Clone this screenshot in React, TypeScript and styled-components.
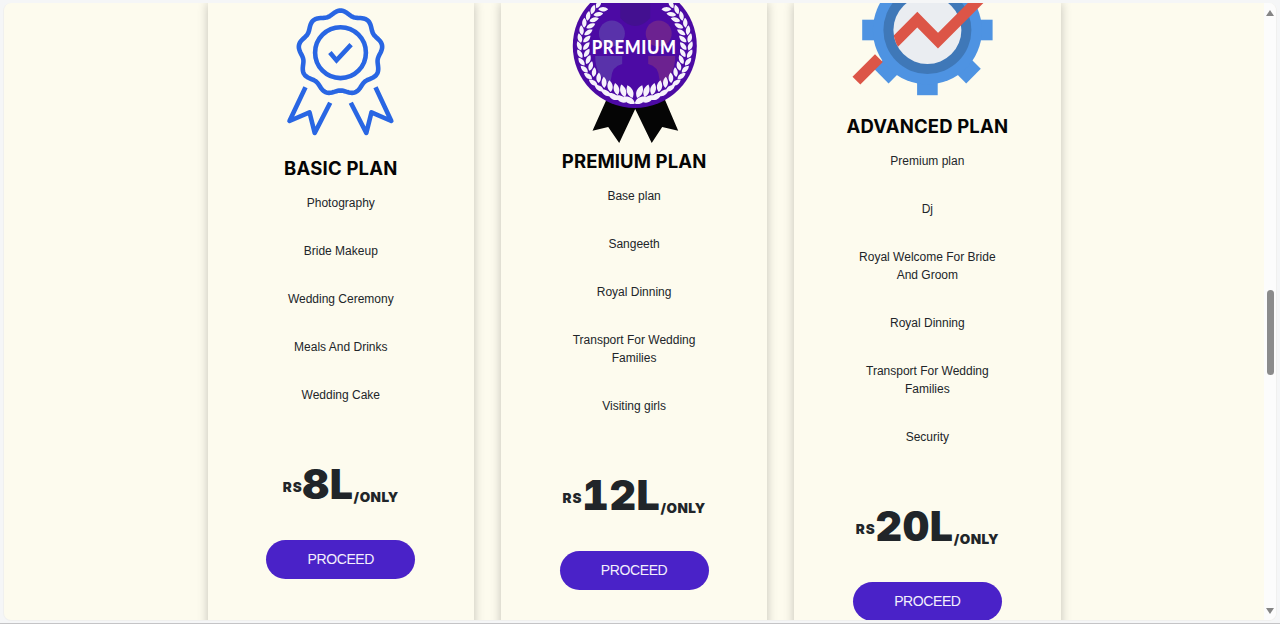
import React from "react";
import styled, { createGlobalStyle } from "styled-components";

const GlobalStyle = createGlobalStyle`
  * { box-sizing: border-box; }
  body { margin: 0; background: #f5f6f7; font-family: "Liberation Sans", Arial, sans-serif; }
`;

const Shell = styled.div`
  height: 624px;
  padding: 3px;
  border-bottom: 1px solid #c4c4c6;
  overflow: hidden;
`;

const Viewport = styled.div`
  display: flex;
  height: 618px;
  border: 1px solid #f0f0ef;
  border-top: 0;
  border-radius: 8px;
  overflow: hidden;
  background: #fdfbee;
`;

const Plans = styled.main`
  flex: 1;
  display: flex;
  gap: 26.7px;
  padding-left: 203.5px;
`;

const Card = styled.section`
  flex: none;
  width: 266.6px;
  height: 700px;
  padding: 0 58.8px;
  display: flex;
  flex-direction: column;
  background: #fdfbee;
  box-shadow: 0 0 10px rgba(0, 0, 0, 0.23);
`;

const Art = styled.svg<{ $height: number }>`
  display: block;
  flex: none;
  width: 149px;
  height: ${(p) => p.$height}px;
  overflow: visible;
`;

const Title = styled.h2<{ $spacing: number }>`
  margin: 0 -20px;
  height: 22px;
  font: 650 18.5px/22px Inter, sans-serif;
  letter-spacing: ${(p) => p.$spacing}px;
  color: #050505;
  text-align: center;
  white-space: nowrap;
`;

const Features = styled.ul`
  list-style: none;
  margin: 0;
  padding: 0;
`;

const Feature = styled.li`
  padding: 15px 0;
  font-size: 12px;
  line-height: 18px;
  color: #212529;
  text-align: center;
`;

const Price = styled.div`
  display: flex;
  justify-content: center;
  align-items: baseline;
  height: 121px;
  margin: 0 -20px;
  padding-top: 41px;
  font-family: Inter, sans-serif;
  font-weight: 900;
  line-height: 48px;
  color: #212529;
`;

const Currency = styled.span`
  position: relative;
  top: -7px;
  font-size: 13.5px;
  letter-spacing: 0.9px;
`;

const Amount = styled.span`
  font-size: 41px;
  font-variant-numeric: tabular-nums;
  letter-spacing: 0.7px;
`;

const Period = styled.span`
  position: relative;
  top: 3px;
  font-size: 13.5px;
  letter-spacing: 0.5px;
`;

const Proceed = styled.button`
  flex: none;
  height: 38.5px;
  padding: 0;
  border: 0;
  border-radius: 20px;
  background: #4a22c8;
  color: #f3effc;
  font: 14px/38px "Liberation Sans", Arial, sans-serif;
  letter-spacing: -0.4px;
`;

const Scrollbar = styled.div`
  display: flex;
  flex-direction: column;
  align-items: center;
  width: 12px;
  padding: 7px 0 6px;
  background: #fcfcfc;
`;

const Arrow = styled.svg`
  display: block;
  width: 8px;
  height: 6px;
  fill: #858585;
`;

const Thumb = styled.div`
  width: 7px;
  height: 85px;
  margin: 274px 0 auto;
  border-radius: 4px;
  background: #8b8b8b;
`;

const wave = Array.from({ length: 181 }, (_, i) => {
  const t = (i * Math.PI) / 90;
  const r = 40 + 2.2 * Math.cos(9 * t);
  return `${(341 + r * Math.sin(t)).toFixed(2)},${(52.7 - r * Math.cos(t)).toFixed(2)}`;
}).join(" ");

const BasicArt = () => (
  <Art $height={154} viewBox="266.5 3 149 154" fill="none" stroke="#2966e3" strokeWidth="4.6">
    <polygon points={wave} strokeLinejoin="round" />
    <circle cx="341" cy="52.7" r="25.4" />
    <path d="M330.4 52.6 L337 60.4 L351.6 44.6" />
    <path d="M306 87.3 L290 121 L310 112.3 L315.2 133 L330.7 102.7" strokeLinejoin="round" />
    <path d="M376 87.3 L391.8 121 L372 112.3 L366.8 133 L351.3 102.7" strokeLinejoin="round" />
  </Art>
);

const Leaf = ({ r, angle, tilt, size }: { r: number; angle: number; tilt: number; size: number }) => (
  <path
    d="M0 4.6 C-3 2 -2.6 -2 0 -4.8 C2.6 -2 3 2 0 4.6Z"
    transform={`rotate(${angle}) translate(0 ${r}) rotate(${tilt}) scale(${size})`}
  />
);

const Branch = () => (
  <>
    {Array.from({ length: 17 }, (_, i) => {
      const k = Math.min(i / 6, 1);
      const size = 1.45 - k * 0.4;
      const angle = -6 - i * 8.2 - k * 2;
      return (
        <React.Fragment key={i}>
          <Leaf r={46 + k * 2.5} angle={angle} tilt={28 + k * 22} size={size} />
          <Leaf r={54.5 + k} angle={angle} tilt={66 + k * 46} size={size} />
        </React.Fragment>
      );
    })}
  </>
);

const PremiumArt = () => (
  <Art $height={147} viewBox="559.8 3 149 147">
    <path d="M607 98 L592.3 130.7 L608 127 L619 143 L635 109 L651.5 143 L662 127 L678 130.7 L664 98Z" fill="#050505" />
    <circle cx="634.6" cy="46" r="62" fill="#4c0aa4" />
    <path d="M620 0 H650 V18 Q635 34 620 18Z" fill="#431090" />
    <g fill="#5932aa">
      <circle cx="611.7" cy="33.5" r="13" />
      <path d="M595 56 H622 V64 Q612 66 611 78 L610 84 Q595 76 595 56Z" />
    </g>
    <g fill="#6c2290">
      <circle cx="658.5" cy="33.5" r="13" />
      <path d="M675 56 H648 V64 Q658 66 659 78 L660 84 Q675 76 675 56Z" />
    </g>
    <g fill="#f6f2fb">
      <g transform="translate(634.6 46) scale(-1 1)"><Branch /></g>
      <g transform="translate(634.6 46)"><Branch /></g>
    </g>
    <text x="591.5" y="54.2" textLength="85" lengthAdjust="spacingAndGlyphs" fontFamily="Lato, sans-serif" fontWeight="900" fontSize="19" letterSpacing="0.7" fill="#ffffff">
      PREMIUM
    </text>
  </Art>
);

const AdvancedArt = () => (
  <Art $height={112} viewBox="853 3 149 112">
    <defs>
      <clipPath id="trend">
        <circle r="34" />
        <rect x="0" y="-60" width="80" height="120" />
      </clipPath>
    </defs>
    <g transform="translate(927.4 30)">
      <g fill="#4e93e2">
        {[0, 45, 90, 135, 180, 225, 270, 315].map((a) => (
          <rect key={a} x="-10.3" y="40" width="20.6" height="25.2" transform={`rotate(${a})`} />
        ))}
      </g>
      <circle r="54.5" fill="#4e93e2" />
      <path d="M-71 50.7 L-48.5 28.2" stroke="#dc5547" strokeWidth="11" />
      <circle r="44" fill="#3f78b8" />
      <circle r="34" fill="#eaedf1" />
      <path d="M-71 50.7 L-10.1 -10.4 L10.6 10.6 L60 -38.8" fill="none" stroke="#dc5547" strokeWidth="11" clipPath="url(#trend)" />
    </g>
  </Art>
);

const plans = [
  { name: "BASIC PLAN", spacing: 0.2, art: <BasicArt />, price: "8L", features: ["Photography", "Bride Makeup", "Wedding Ceremony", "Meals And Drinks", "Wedding Cake"] },
  { name: "PREMIUM PLAN", spacing: 0.1, art: <PremiumArt />, price: "12L", features: ["Base plan", "Sangeeth", "Royal Dinning", "Transport For Wedding Families", "Visiting girls"] },
  { name: "ADVANCED PLAN", spacing: 0.15, art: <AdvancedArt />, price: "20L", features: ["Premium plan", "Dj", "Royal Welcome For Bride And Groom", "Royal Dinning", "Transport For Wedding Families", "Security"] },
];

export default function App() {
  return (
    <>
      <GlobalStyle />
      <Shell>
        <Viewport>
          <Plans>
            {plans.map((plan) => (
              <Card key={plan.name}>
                {plan.art}
                <Title $spacing={plan.spacing}>{plan.name}</Title>
                <Features>
                  {plan.features.map((f) => (
                    <Feature key={f}>{f}</Feature>
                  ))}
                </Features>
                <Price>
                  <Currency>RS</Currency>
                  <Amount>{plan.price}</Amount>
                  <Period>/ONLY</Period>
                </Price>
                <Proceed>PROCEED</Proceed>
              </Card>
            ))}
          </Plans>
          <Scrollbar>
            <Arrow viewBox="0 0 8 6"><path d="M4 0 L8 6 H0Z" /></Arrow>
            <Thumb />
            <Arrow viewBox="0 0 8 6"><path d="M4 6 L8 0 H0Z" /></Arrow>
          </Scrollbar>
        </Viewport>
      </Shell>
    </>
  );
}
